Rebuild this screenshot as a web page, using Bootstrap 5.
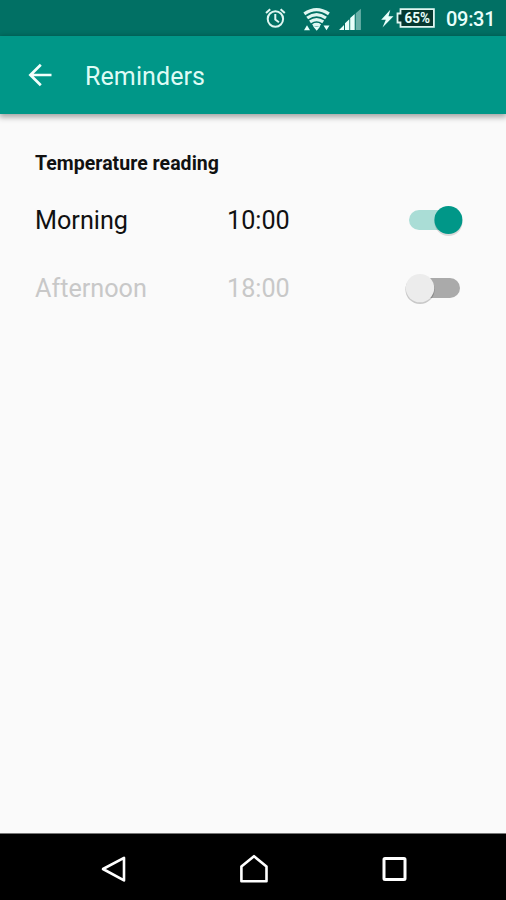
<!DOCTYPE html>
<html lang="en">
<head>
<meta charset="utf-8">
<meta name="viewport" content="width=device-width, initial-scale=1">
<title>Reminders</title>
<link href="https://cdn.jsdelivr.net/npm/bootstrap@5.3.0/dist/css/bootstrap.min.css" rel="stylesheet">
<style>
body{font-family:Roboto,"Liberation Sans",sans-serif;background:#fafafa;color:#111;height:900px;overflow:hidden}
svg{display:block;flex:none}
.status{height:36px;background:#017064;padding-right:11px}
.clock{font-size:20px;font-weight:500;line-height:36px;padding-top:1px;color:#e9fffb;width:49px;white-space:nowrap;letter-spacing:-.3px}
.appbar{height:78px;background:#009788;box-shadow:0 2px 6px 1px rgba(0,0,0,.36);padding-left:24px;z-index:1}
.back{width:32px;height:32px;margin-top:0}
.title{font-size:25px;line-height:32px;margin:4px 0 0 29px;color:#dffbf5;font-weight:400;letter-spacing:.1px}
.content{padding:36px 42px 0 35px}
.heading{font-size:19.5px;line-height:28px;font-weight:700;margin:0 0 24px;letter-spacing:.03px}
.item{height:67.5px;font-size:25.2px;line-height:38px}
.name{width:192px}
.off{color:#c8c8c8}
.toggle{width:56px;height:36px;margin:0}
.sys{height:67px;background:#000;border-top:1px solid #777;padding:4px 96px 0 98px}
</style>
</head>
<body class="d-flex flex-column">
<div class="status d-flex align-items-start justify-content-end">
  <svg width="184" height="36" viewBox="262 0 184 36" fill="none" stroke="#dff6f1" role="img" aria-label="Alarm, Wi-Fi, signal, battery">
    <g stroke-width="2"><circle cx="275.4" cy="19" r="7.7"/><path d="M275.3 14v5.6l3.6 2.6M266 13l4.2-3.8M284.8 13l-4.2-3.8"/></g>
    <g stroke-width="3.2"><path d="M304.3 13.9q12.2-8.6 24.6 0M307.2 18q9.4-6.6 18.8 0M310 21.9q6.6-4.6 13.2 0M313 25.6q3.6-2.3 7.2 0"/></g>
    <g fill="#e9fffb" stroke="none">
      <path d="M313.2 26.5h7l-3.5 4.2zM304 30.2l3-5 3 5zM323.5 25.4h6l-3 4.9z"/>
      <path d="M339 30l5-5v5zM345 30v-6.7l4.3-4V30zM350.2 30V18l4.5-4v16z"/>
      <path d="M355.7 30V13.3l5.2-4.6V30z" opacity=".45"/>
      <path d="M390.3 9.8l-9.1 9.9h4.6L382.5 27.5l11-11.2h-5z"/>
    </g>
    <path d="M400.5 9.2h33.4v17.6h-33.4v-4.3h-3v-9h3z" fill="#06382f" stroke-width="1.8"/>
    <text x="404.4" y="23.2" font-size="14.5" font-weight="700" fill="#e9fffb" stroke="none" textLength="25.6" lengthAdjust="spacingAndGlyphs">65%</text>
  </svg>
  <div class="clock">09:31</div>
</div>
<header class="appbar d-flex align-items-center position-relative">
  <svg class="back" viewBox="24 59 32 32" fill="none" stroke="#f2fffc" stroke-width="2.7"><path d="M51.5 75H30.5M40.8 64.7L30.4 75l10.4 10.3"/></svg>
  <h1 class="title">Reminders</h1>
</header>
<main class="content flex-grow-1">
  <h2 class="heading">Temperature reading</h2>
  <div class="item d-flex align-items-start">
    <span class="name">Morning</span><span>10:00</span>
    <svg class="toggle ms-auto" viewBox="408 202 56 36" role="img" aria-label="On">
      <rect x="409" y="210" width="50" height="20" rx="10" fill="#aaddd6"/>
      <circle cx="448.5" cy="222" r="14" fill="#000" opacity=".13"/><circle cx="448.4" cy="220" r="14" fill="#009788"/>
    </svg>
  </div>
  <div class="item off d-flex align-items-start">
    <span class="name">Afternoon</span><span>18:00</span>
    <svg class="toggle ms-auto" viewBox="408 269.5 56 36" overflow="visible" role="img" aria-label="Off">
      <rect x="411" y="277.5" width="49" height="20" rx="10" fill="#aaa"/>
      <circle cx="420" cy="289" r="14.6" fill="#000" opacity=".2"/><circle cx="420" cy="287.6" r="14.2" fill="#ececec"/>
    </svg>
  </div>
</main>
<nav class="sys d-flex align-items-center justify-content-between">
  <svg width="32" height="32" viewBox="97 853 32 32" fill="none" stroke="#fff" stroke-width="2.6"><path d="M123 857.8v22.6L102 869z" stroke-linejoin="round"/></svg>
  <svg width="32" height="32" viewBox="238 853 32 32" fill="none" stroke="#fff" stroke-width="2.6" stroke-linejoin="round"><path d="M241.4 881.2v-14.6L254 856.2l12.5 10.4v14.6z"/></svg>
  <svg width="32" height="32" viewBox="378 853 32 32" fill="none" stroke="#fff" stroke-width="3"><rect x="384" y="858.5" width="21" height="21" rx="1"/></svg>
</nav>
<script src="https://cdn.jsdelivr.net/npm/bootstrap@5.3.0/dist/js/bootstrap.bundle.min.js"></script>
</body>
</html>
